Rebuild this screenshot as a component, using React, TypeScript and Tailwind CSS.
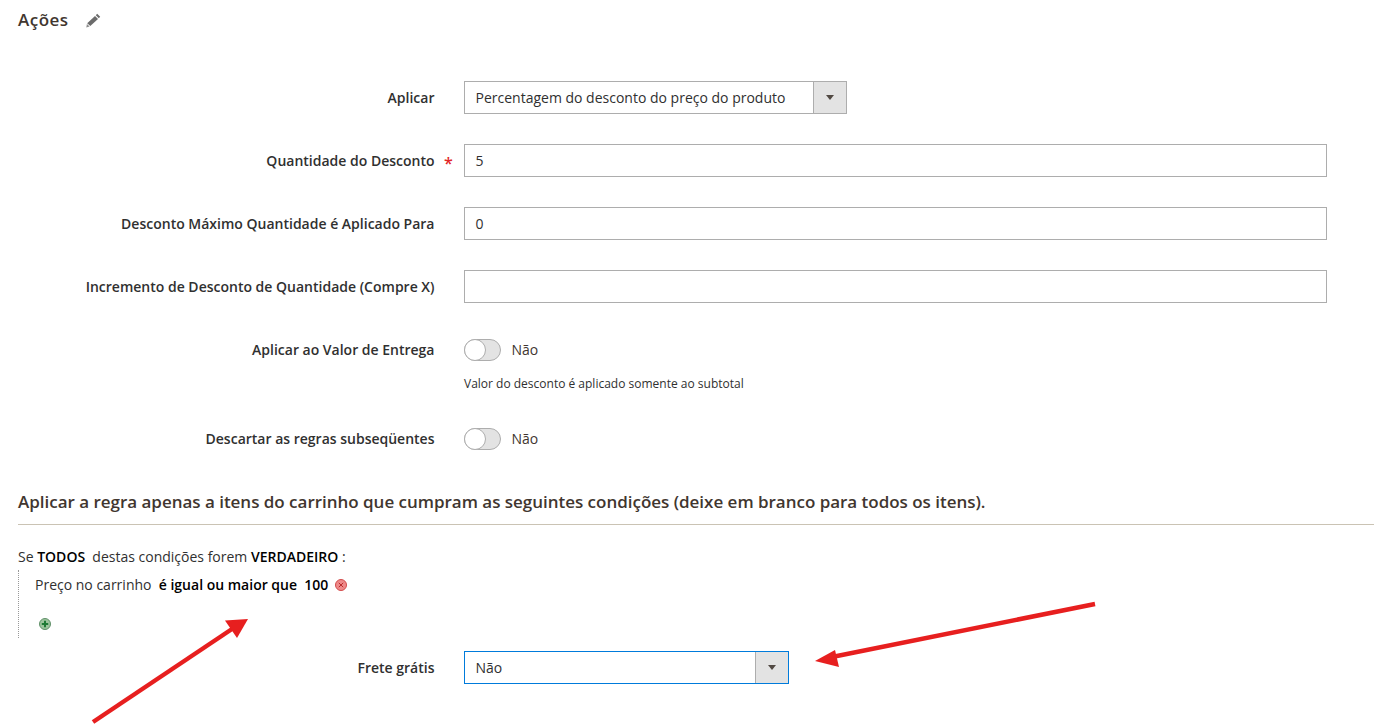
const FONT = "font-['Open_Sans',sans-serif]";

const Label = ({ text, required, lift }: { text: string; required?: boolean; lift?: boolean }) => (
    <div className={`relative w-[434.5px] shrink-0 pl-2 text-right text-sm leading-[19px] font-semibold text-[#303030] ${lift ? "-mt-[2px]" : ""}`}>
        {text}
        {required && <span className="absolute left-[444px] top-0 text-base text-[#e22626]">*</span>}
    </div>
);

const Row = ({ children, className }: { children: React.ReactNode; className: string }) => (
    <div className={`flex items-center ${className}`}>{children}</div>
);

const TextInput = ({ value }: { value?: string }) => (
    <div className="ml-[29.5px] flex h-[33px] w-[863px] items-center border border-[#adadad] bg-white pl-[10.5px] text-sm text-[#303030]">
        {value}
    </div>
);

const Select = ({ value, width, focused }: { value: string; width: string; focused?: boolean }) => (
    <div className={`ml-[29.5px] flex h-[33px] items-stretch border bg-white text-sm text-[#303030] ${width} ${focused ? "border-[#007bdb]" : "border-[#adadad]"}`}>
        <div className="flex flex-1 items-center pl-[10.5px]">{value}</div>
        <div className="flex w-[33px] items-center justify-center border-l border-[#adadad] bg-[#e3e3e3]">
            <div className="h-0 w-0 border-x-[4px] border-t-[5px] border-x-transparent border-t-[#514943]" />
        </div>
    </div>
);

const Toggle = () => (
    <div className="ml-[29.5px] flex items-center">
        <div className="flex h-[22px] w-[37px] rounded-full border border-[#adadad] bg-[#e3e3e3]">
            <div className="-m-px h-[22px] w-[22px] rounded-full border border-[#adadad] bg-white" />
        </div>
        <span className="ml-[10.5px] text-sm text-[#41362f]">Não</span>
    </div>
);

const Arrows = () => (
    <svg className="pointer-events-none absolute left-0 top-0" width="1374" height="726" viewBox="0 0 1374 726">
        <path d="M93 722 L232 629" stroke="#e71f1f" strokeWidth="4.5" fill="none" />
        <path d="M248 619 L225 620.5 L237 638 Z" fill="#e71f1f" />
        <path d="M1095 604 L832 657" stroke="#e71f1f" strokeWidth="4.5" fill="none" />
        <path d="M815 661 L835 650 L839 667 Z" fill="#e71f1f" />
    </svg>
);

export default function App() {
    return (
        <div className={`relative h-[726px] w-[1374px] overflow-hidden bg-white ${FONT}`}>
            <div className="flex items-center pl-[18px] pt-[9px]">
                <h2 className="text-[17px] leading-[22px] font-semibold tracking-[0.5px] text-[#41362f]">Ações</h2>
                <svg className="ml-[17px]" width="15" height="15" viewBox="0 0 15 15">
                    <path d="M11.2 0.8 L14.2 3.8 L12.8 5.2 L9.8 2.2 Z" fill="#6b6b6b" />
                    <path d="M9 3 L12 6 L4.3 13.1 L1.2 10.2 Z" fill="#6b6b6b" />
                    <path d="M0.9 11 L3.6 13.6 L0.3 14.6 Z" fill="#8d8d8d" />
                </svg>
            </div>

            <Row className="mt-[50px] h-[33px]">
                <Label text="Aplicar" />
                <Select value="Percentagem do desconto do preço do produto" width="w-[383px]" />
            </Row>
            <Row className="mt-[30px] h-[33px]">
                <Label text="Quantidade do Desconto" required />
                <TextInput value="5" />
            </Row>
            <Row className="mt-[30px] h-[33px]">
                <Label text="Desconto Máximo Quantidade é Aplicado Para" />
                <TextInput value="0" />
            </Row>
            <Row className="mt-[30px] h-[33px]">
                <Label text="Incremento de Desconto de Quantidade (Compre X)" />
                <TextInput />
            </Row>
            <Row className="mt-[36px] h-[22px]">
                <Label text="Aplicar ao Valor de Entrega" lift />
                <Toggle />
            </Row>
            <p className="ml-[464px] mt-[14px] text-xs leading-[17px] text-[#303030]">Valor do desconto é aplicado somente ao subtotal</p>
            <Row className="mt-[36px] h-[22px]">
                <Label text="Descartar as regras subseqüentes" lift />
                <Toggle />
            </Row>

            <div className="mt-[41px] ml-[18px] border-b border-[#cac3b4] pb-[11px]">
                <h3 className="text-[17px] leading-[22px] font-semibold tracking-[-0.02px] text-[#41362f]">
                    Aplicar a regra apenas a itens do carrinho que cumpram as seguintes condições (deixe em branco para todos os itens).
                </h3>
            </div>

            <p className="ml-[18px] mt-[22px] text-sm leading-[19px] text-[#303030]">
                Se <b className="font-semibold text-black">TODOS</b>&nbsp; destas condições forem <b className="font-semibold text-black">VERDADEIRO</b> :
            </p>
            <div className="ml-[18px] mt-[4px] h-[68px] border-l border-dotted border-[#999] pl-[16px] pt-[5px]">
                <div className="flex items-center text-sm leading-[19px] text-[#303030]">
                    Preço no carrinho&nbsp;&nbsp;<b className="font-semibold text-black">é igual ou maior que&nbsp;&nbsp;100</b>
                    <svg className="ml-[7px]" width="12" height="12" viewBox="0 0 12 12">
                        <circle cx="6" cy="6" r="5.5" fill="#ee8a8a" stroke="#d24a4a" />
                        <path d="M3.8 3.8 L8.2 8.2 M8.2 3.8 L3.8 8.2" stroke="#b92c2c" strokeWidth="1" />
                    </svg>
                </div>
                <svg className="ml-[4px] mt-[24px]" width="12" height="12" viewBox="0 0 12 12">
                    <circle cx="6" cy="6" r="5.5" fill="#9cc49c" stroke="#5f8f68" />
                    <path d="M6 2.8 V9.2 M2.8 6 H9.2" stroke="#1f7a35" strokeWidth="2" />
                </svg>
            </div>

            <Row className="mt-[13px] h-[33px]">
                <Label text="Frete grátis" />
                <Select value="Não" width="w-[325px]" focused />
            </Row>

            <Arrows />
        </div>
    );
}
